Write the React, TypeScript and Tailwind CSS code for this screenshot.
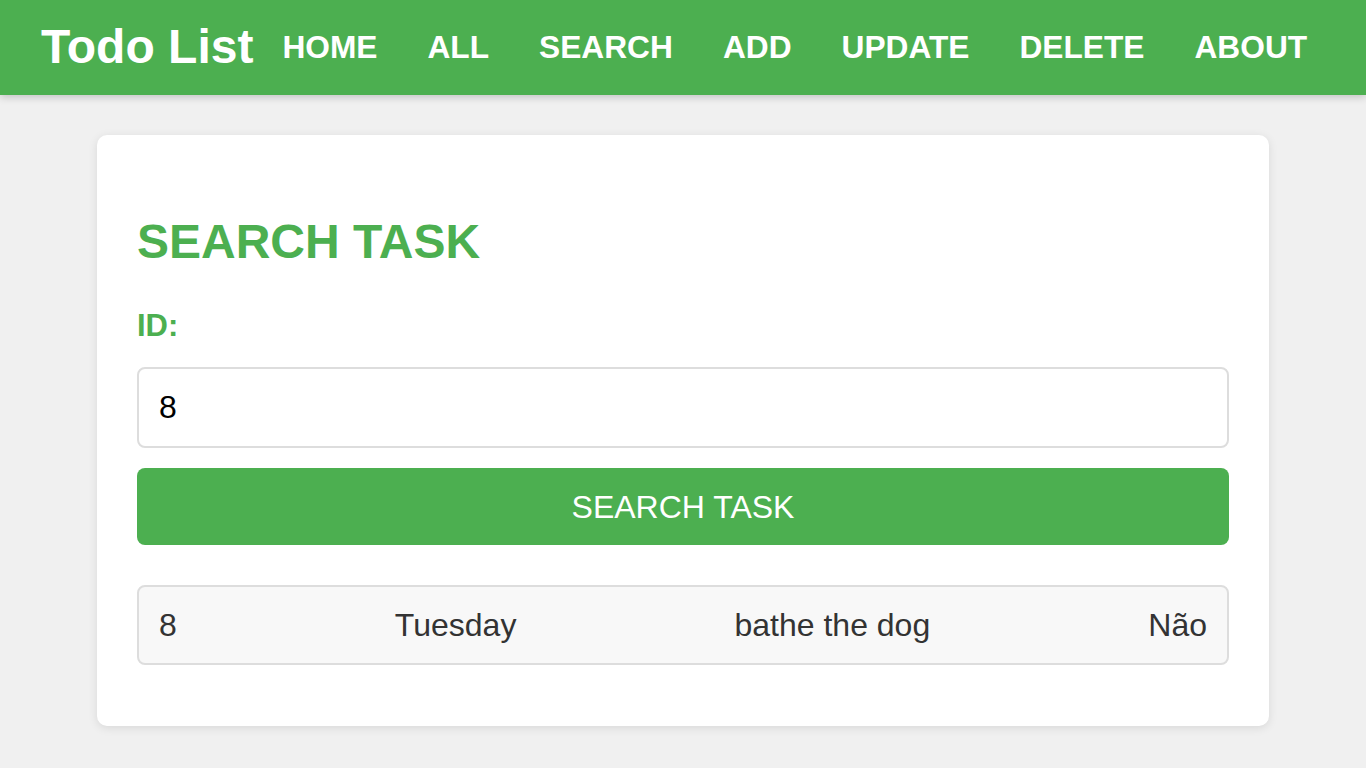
import React from 'react';

const navItems = ['HOME', 'ALL', 'SEARCH', 'ADD', 'UPDATE', 'DELETE', 'ABOUT'];

const App: React.FC = () => {
  return (
    <div className="min-h-screen bg-[#f0f0f0] font-['Liberation_Sans',Arial,sans-serif]">
      {/* Top bar */}
      <header className="h-[95px] bg-[#4caf50] flex items-center pl-[41px] shadow-[0_2px_8px_rgba(0,0,0,0.2)] relative z-10">
        <h1 className="text-[48px] font-bold text-white leading-none mt-[-2px]">Todo List</h1>
        <nav className="flex ml-[29px] gap-[50px]">
          {navItems.map((item) => (
            <a key={item} href="#" className="text-[31.7px] font-bold text-white leading-none">
              {item}
            </a>
          ))}
        </nav>
      </header>

      <main className="pt-[40px] pb-[40px] flex justify-center">
        <div className="w-[1172px] bg-white rounded-[10px] shadow-[0_2px_10px_rgba(0,0,0,0.1)] px-[40px] pt-[83px] pb-[61px]">
          <h2 className="text-[48px] font-bold text-[#4caf50] leading-none">SEARCH TASK</h2>

          <label className="block mt-[44px] text-[31px] font-bold text-[#4caf50] leading-none">ID:</label>

          <input
            type="text"
            defaultValue="8"
            className="block w-full mt-[26px] h-[81px] border-2 border-[#ddd] rounded-[8px] px-[20px] text-[32px] text-black outline-none"
          />

          <button className="block w-full mt-[20px] h-[77px] bg-[#4caf50] text-white text-[32px] rounded-[8px]">
            SEARCH TASK
          </button>

          <div className="mt-[40px] h-[80px] flex items-center justify-between border-2 border-[#ddd] rounded-[8px] bg-[#f8f8f8] px-[20px] text-[32px] text-[#333]">
            <span>8</span>
            <span>Tuesday</span>
            <span>bathe the dog</span>
            <span>Não</span>
          </div>
        </div>
      </main>
    </div>
  );
};

export default App;
